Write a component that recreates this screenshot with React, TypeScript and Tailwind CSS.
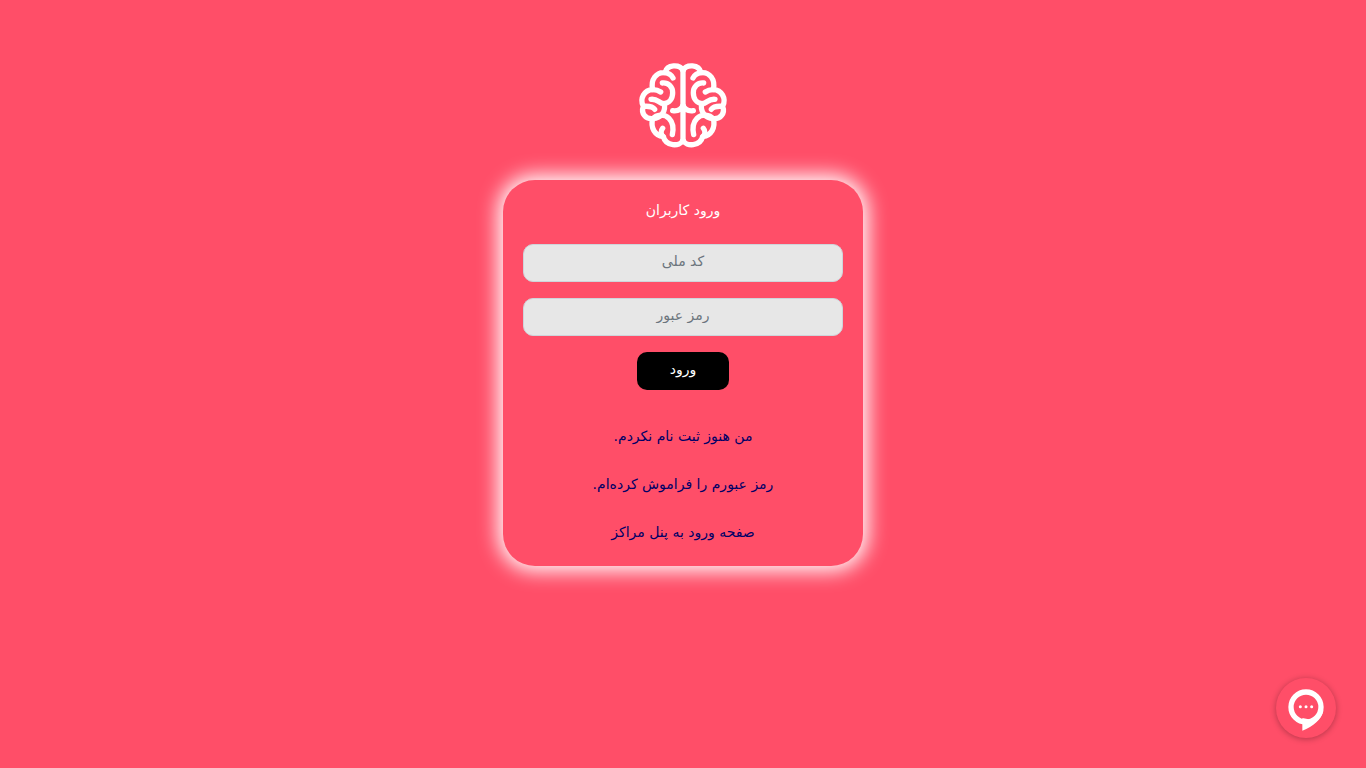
function Hemisphere() {
  return (
    <>
      <path d="M150 46C140 27 102 27 96 53C70 50 52 74 59 104C34 105 19 130 31 154C23 175 38 193 59 191C52 218 65 241 91 245C98 274 140 276 150 256" />
      <path d="M96 53C107 54 115 60 120 69" />
      <path d="M88 84C106 82 119 96 119 113C119 131 109 144 93 146C76 145 76 131 54 133" />
      <path d="M60 104C68 104 76 106 83 111" />
      <path d="M93 146C100 168 84 190 60 191" />
      <path d="M32 154C46 153 58 153 65 163" />
      <path d="M60 191C70 178 94 176 108 190C120 202 122 220 118 239" />
      <path d="M91 245C83 238 82 228 89 220" />
      <path d="M119 167C134 169 145 162 150 152" />
    </>
  );
}

function BrainLogo() {
  return (
    <svg
      viewBox="0 0 300 300"
      className="size-[100px]"
      fill="none"
      stroke="#fff"
      strokeWidth="16"
      strokeLinecap="round"
      strokeLinejoin="round"
      aria-hidden="true"
    >
      <path d="M150 44V257" />
      <Hemisphere />
      <g transform="matrix(-1 0 0 1 300 0)">
        <Hemisphere />
      </g>
    </svg>
  );
}

function ChatIcon() {
  return (
    <svg viewBox="0 0 180 180" className="size-[60px]" fill="#fff" aria-hidden="true">
      <circle cx="90" cy="87" r="45" fill="none" stroke="#fff" strokeWidth="16" />
      <path d="M79 120L98 124C118 121 130 110 137 98L142 98C137 124 112 144 79 158Z" />
      <circle cx="73" cy="86" r="4.5" />
      <circle cx="90" cy="86" r="4.5" />
      <circle cx="107" cy="86" r="4.5" />
    </svg>
  );
}

const fieldClass =
  "h-[38px] w-full rounded-[10px] border border-[#ced4da] bg-[#e7e7e7] px-3 pb-1 text-center text-sm text-[#495057] placeholder:text-[#6c757d] placeholder:opacity-100";

const links = [
  "من هنوز ثبت نام نکردم.",
  "رمز عبورم را فراموش کرده‌ام.",
  "صفحه ورود به پنل مراکز",
];

export default function App() {
  return (
    <div
      dir="rtl"
      lang="fa"
      className="flex min-h-screen flex-col items-center bg-[#ff4e68] px-4 pt-[55px] pb-8 font-['DejaVu_Sans',sans-serif] text-sm"
    >
      <BrainLogo />
      <main className="mt-[25px] w-full max-w-[360px] rounded-[32px] px-5 pt-[18px] pb-[22px] shadow-[0_0_20px_5px_#fff]">
        <form onSubmit={(e) => e.preventDefault()} className="flex flex-col items-center gap-4">
          <h1 className="mb-[6px] leading-6 text-white">ورود کاربران</h1>
          <input type="text" aria-label="کد ملی" placeholder="کد ملی" className={fieldClass} />
          <input type="password" aria-label="رمز عبور" placeholder="رمز عبور" className={fieldClass} />
          <button type="submit" className="h-[38px] w-[92px] rounded-[10px] bg-black pb-1 text-white">
            ورود
          </button>
        </form>
        <nav className="mt-[34px] flex flex-col items-center gap-6 leading-6 text-[#000066]">
          {links.map((label) => (
            <a key={label} href="#">
              {label}
            </a>
          ))}
        </nav>
      </main>
      <button
        type="button"
        aria-label="گفتگو"
        className="fixed right-[30px] bottom-[30px] size-[60px] rounded-full bg-[#ff4e68] shadow-[0_1px_6px_rgba(0,0,0,0.3)]"
      >
        <ChatIcon />
      </button>
    </div>
  );
}
